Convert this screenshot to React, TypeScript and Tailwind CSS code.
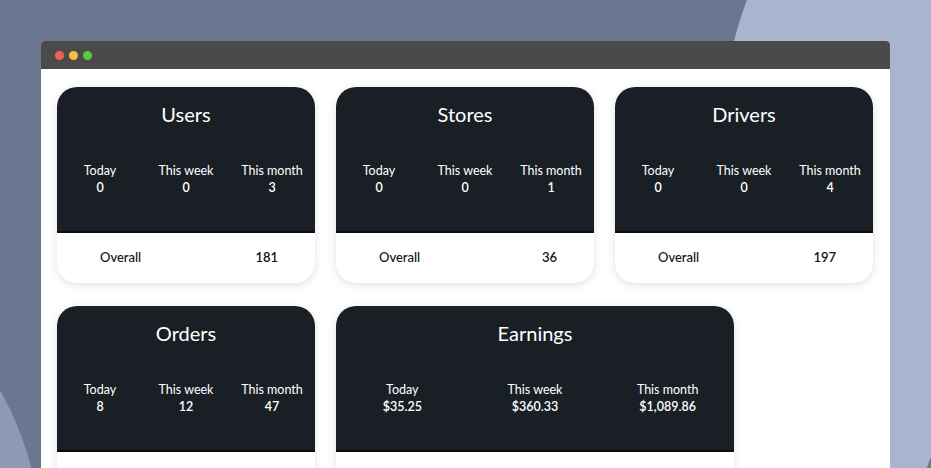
const font = { fontFamily: "Lato, 'Noto Sans', sans-serif" };

type Stat = { label: string; value: string };

function Card({ title, stats, overall, wide }: { title: string; stats: Stat[]; overall?: string; wide?: boolean }) {
  return (
    <div className={`${wide ? "w-[398px]" : "w-[258px]"} h-[196px] shrink-0 overflow-hidden rounded-[20px] bg-white shadow-[0_2px_8px_rgba(0,0,0,0.12)]`}>
      <div className="h-[146px] bg-[#1a1f26] text-white border-b-2 border-[#0b0d10]">
        <div className="pt-[15px] text-center text-[20px] leading-[24px]">{title}</div>
        <div className="mt-[36px] grid grid-cols-3 text-center text-[12.5px] leading-[17px]">
          {stats.map((s) => (
            <div key={s.label}>
              <div>{s.label}</div>
              <div className="font-semibold">{s.value}</div>
            </div>
          ))}
        </div>
      </div>
      {overall && (
        <div className="flex h-[50px] items-center justify-between pl-[43px] pr-[37px] text-[13px] text-[#111]">
          <span className="font-medium">Overall</span>
          <span className="font-semibold">{overall}</span>
        </div>
      )}
    </div>
  );
}

const s = (a: string, b: string, c: string): Stat[] => [
  { label: "Today", value: a },
  { label: "This week", value: b },
  { label: "This month", value: c },
];

export default function App() {
  return (
    <div className="relative h-[468px] w-[931px] overflow-hidden bg-[#6b7690]" style={font}>
      <div className="absolute left-[717px] top-[-330px] h-[1000px] w-[1100px] rounded-full bg-[#a9b4cf]" />
      <div className="absolute left-[890px] top-[75px] h-[600px] w-[600px] rounded-tl-[100%] bg-[#6b7690]" />
      <div className="absolute left-[-560px] top-[240px] h-[700px] w-[600px] rounded-full bg-[#8e99b4]" />
      <div className="relative ml-[41px] mt-[41px] w-[849px] overflow-hidden rounded-t-[4px] bg-white">
        <div className="flex h-[28px] items-center gap-[5px] bg-[#4a4a4a] pl-[14px]">
          <span className="h-[9px] w-[9px] rounded-full bg-[#f25f58]" />
          <span className="h-[9px] w-[9px] rounded-full bg-[#fbbe3c]" />
          <span className="h-[9px] w-[9px] rounded-full bg-[#58cb42]" />
        </div>
        <div className="flex flex-col gap-[23px] pl-[16px] pt-[18px] h-[400px]">
          <div className="flex gap-[21px]">
            <Card title="Users" stats={s("0", "0", "3")} overall="181" />
            <Card title="Stores" stats={s("0", "0", "1")} overall="36" />
            <Card title="Drivers" stats={s("0", "0", "4")} overall="197" />
          </div>
          <div className="flex gap-[21px]">
            <Card title="Orders" stats={s("8", "12", "47")} />
            <Card title="Earnings" stats={s("$35.25", "$360.33", "$1,089.86")} wide />
          </div>
        </div>
      </div>
    </div>
  );
}
